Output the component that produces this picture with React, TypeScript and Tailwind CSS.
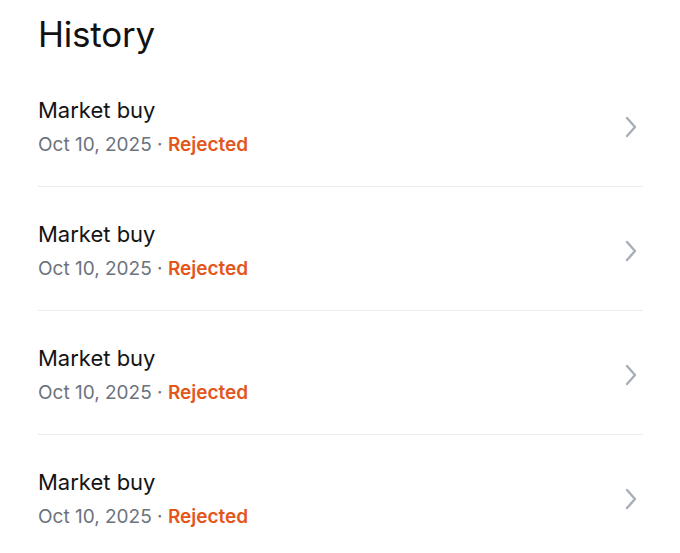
const orders = [
  { id: 1, label: "Market buy", date: "Oct 10, 2025", status: "Rejected" },
  { id: 2, label: "Market buy", date: "Oct 10, 2025", status: "Rejected" },
  { id: 3, label: "Market buy", date: "Oct 10, 2025", status: "Rejected" },
  { id: 4, label: "Market buy", date: "Oct 10, 2025", status: "Rejected" },
];

function Chevron() {
  return (
    <svg width="12" height="22" viewBox="0 0 12 22" fill="none">
      <path
        d="M2 2l8 9-8 9"
        stroke="#a7aeb8"
        strokeWidth="2.4"
        strokeLinecap="round"
        strokeLinejoin="round"
      />
    </svg>
  );
}

export default function App() {
  return (
    <main
      className="min-h-screen bg-white pl-[38px] pr-[37px] pt-[14px]"
      style={{ fontFamily: "Inter, 'Noto Sans', sans-serif" }}
    >
      <h1 className="text-[35px] leading-[40px] font-normal text-[#111] mb-[9px] tracking-[-0.2px]">
        History
      </h1>

      <ul>
        {orders.map((o, i) => (
          <li
            key={o.id}
            className={
              "flex items-center justify-between pt-[33px] pb-[28px] " +
              (i < orders.length - 1 ? "border-b border-[#ececec]" : "")
            }
          >
            <div className="flex flex-col gap-2">
              <span className="text-[22px] leading-[28px] text-[#141414]">{o.label}</span>
              <span className="text-[19px] leading-[26px] text-[#6b737d]">
                {o.date} ·{" "}
                <span className="font-semibold text-[#e2571c]">{o.status}</span>
              </span>
            </div>
            <div className="mr-[6px]">
              <Chevron />
            </div>
          </li>
        ))}
      </ul>
    </main>
  );
}
